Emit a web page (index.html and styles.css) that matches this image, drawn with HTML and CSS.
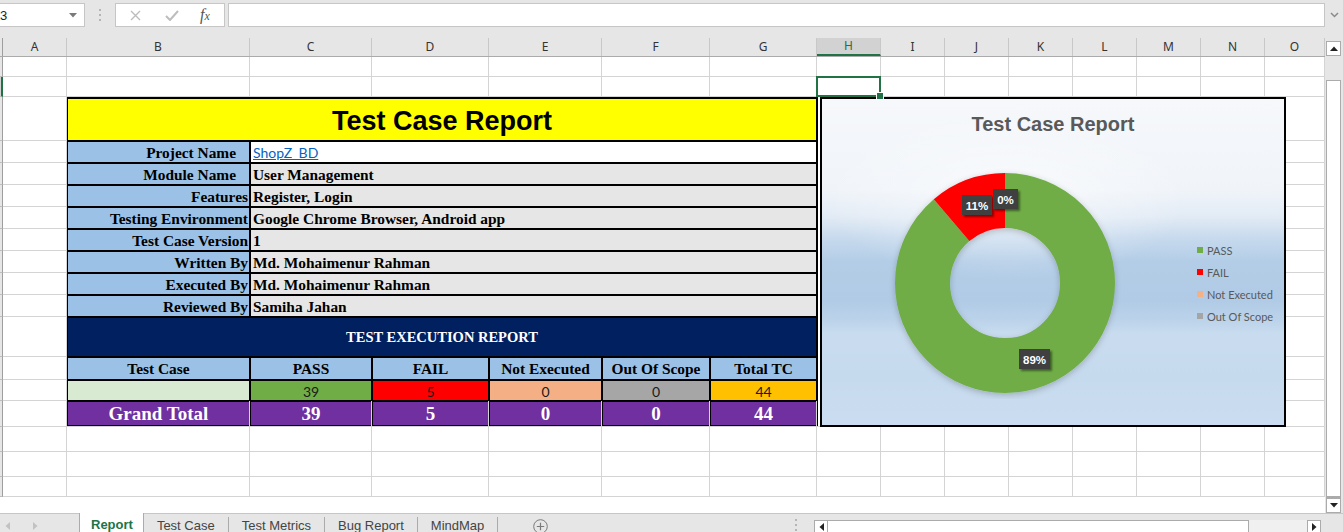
FILE: index.html
```html
<!DOCTYPE html>
<html>
<head>
<meta charset="utf-8">
<title>Test Case Report</title>
<link rel="stylesheet" href="styles.css">
</head>
<body>
<div class="app">
  <div class="fbar">
    <div class="namebox">
      <span class="nm">3</span>
      <svg class="dd" width="8" height="5" viewBox="0 0 8 5"><path d="M0 0H8L4 4.5Z" fill="#7a7a7a"/></svg>
    </div>
    <div class="grip"><svg width="3" height="12" viewBox="0 0 3 12"><rect x="0" y="0" width="2" height="2" fill="#b5b5b5"/><rect x="0" y="5" width="2" height="2" fill="#b5b5b5"/><rect x="0" y="10" width="2" height="2" fill="#b5b5b5"/></svg></div>
    <div class="tools">
      <svg width="11" height="11" viewBox="0 0 11 11"><path d="M1 1L10 10M10 1L1 10" stroke="#bdbdbd" stroke-width="1.4" fill="none"/></svg>
      <svg width="14" height="11" viewBox="0 0 14 11"><path d="M1 6L5 10L13 1" stroke="#bdbdbd" stroke-width="2" fill="none"/></svg>
      <span class="fx"><i>f</i><small>x</small></span>
    </div>
    <div class="finput"></div>
    <div class="chev"><svg width="9" height="6" viewBox="0 0 9 6"><path d="M1 1L4.5 4.5L8 1" stroke="#8a8a8a" stroke-width="1.5" fill="none"/></svg></div>
  </div>

  <div class="main">
    <div class="workspace">
      <div class="colheads">
        <div class="corner"></div>
        <div>A</div><div>B</div><div>C</div><div>D</div><div>E</div><div>F</div><div>G</div>
        <div class="on">H</div><div>I</div><div>J</div><div>K</div><div>L</div><div>M</div><div>N</div><div>O</div>
      </div>

      <div class="sheet">
        <div class="rep">
          <div class="title">Test Case Report</div>

          <div class="lbl pad">Project Name</div><div class="val link">ShopZ_BD</div>
          <div class="lbl pad">Module Name</div><div class="val">User Management</div>
          <div class="lbl">Features</div><div class="val">Register, Login</div>
          <div class="lbl">Testing Environment</div><div class="val">Google Chrome Browser, Android app</div>
          <div class="lbl">Test Case Version</div><div class="val">1</div>
          <div class="lbl">Written By</div><div class="val">Md. Mohaimenur Rahman</div>
          <div class="lbl">Executed By</div><div class="val">Md. Mohaimenur Rahman</div>
          <div class="lbl">Reviewed By</div><div class="val">Samiha Jahan</div>

          <div class="navy">TEST EXECUTION REPORT</div>

          <div class="hd">Test Case</div><div class="hd">PASS</div><div class="hd">FAIL</div><div class="hd">Not Executed</div><div class="hd">Out Of Scope</div><div class="hd">Total TC</div>

          <div class="num tc"></div><div class="num pass">39</div><div class="num fail">5</div><div class="num notex">0</div><div class="num oos">0</div><div class="num total">44</div>

          <div class="gt">Grand Total</div><div class="gt">39</div><div class="gt">5</div><div class="gt">0</div><div class="gt">0</div><div class="gt">44</div>
        </div>

        <div class="chart">
          <h2 class="ctitle">Test Case Report</h2>
          <div class="plot">
            <svg class="donut" width="240" height="240" viewBox="0 0 240 240">
              <defs>
                <filter id="ringshadow" x="-20%" y="-20%" width="140%" height="140%">
                  <feDropShadow dx="0" dy="2" stdDeviation="3" flood-color="#000" flood-opacity="0.22"/>
                </filter>
                <filter id="lblshadow" x="-30%" y="-30%" width="160%" height="160%">
                  <feDropShadow dx="2" dy="2" stdDeviation="1.2" flood-color="#000" flood-opacity="0.45"/>
                </filter>
              </defs>
              <g filter="url(#ringshadow)">
                <g transform="rotate(-90 120 120)">
                  <circle cx="120" cy="120" r="82.5" fill="none" stroke="#70ad47" stroke-width="55" stroke-dasharray="459.5 600"/>
                  <circle cx="120" cy="120" r="82.5" fill="none" stroke="#ff0000" stroke-width="55" stroke-dasharray="58.9 600" stroke-dashoffset="-459.5"/>
                </g>
              </g>
              <g filter="url(#lblshadow)">
                <rect x="77" y="32" width="30" height="20" fill="#404040"/>
                <rect x="108" y="26" width="25" height="20" fill="#404040"/>
                <rect x="134" y="186" width="31" height="20" fill="#404040"/>
              </g>
              <g class="dl">
                <text x="92" y="46.5">11%</text>
                <text x="120.5" y="40.5">0%</text>
                <text x="149.5" y="200.5">89%</text>
              </g>
            </svg>
            <ul class="legend">
              <li><span class="sw" style="background:#70ad47"></span>PASS</li>
              <li><span class="sw" style="background:#ff0000"></span>FAIL</li>
              <li><span class="sw" style="background:#f4b183"></span>Not Executed</li>
              <li><span class="sw" style="background:#a5a5a5"></span>Out Of Scope</li>
            </ul>
          </div>
        </div>

        <!-- row 1 -->
        <i class="rh"></i><i></i><i></i><i></i><i></i><i></i><i></i><i></i><i></i><i></i><i></i><i></i><i></i><i></i><i></i><i></i>
        <!-- row 2 (selected row) -->
        <i class="rh on"></i><i></i><i></i><i></i><i></i><i></i><i></i><i></i><i class="sel"></i><i></i><i></i><i></i><i></i><i></i><i></i><i></i>
        <!-- rows beside the report and the chart -->
        <i class="rh"></i><i></i><i></i>
        <i class="rh"></i><i></i><i></i>
        <i class="rh"></i><i></i><i></i>
        <i class="rh"></i><i></i><i></i>
        <i class="rh"></i><i></i><i></i>
        <i class="rh"></i><i></i><i></i>
        <i class="rh"></i><i></i><i></i>
        <i class="rh"></i><i></i><i></i>
        <i class="rh"></i><i></i><i></i>
        <i class="rh"></i><i></i><i></i>
        <i class="rh"></i><i></i><i></i>
        <i class="rh"></i><i></i><i></i>
        <!-- rows below -->
        <i class="rh"></i><i></i><i></i><i></i><i></i><i></i><i></i><i></i><i></i><i></i><i></i><i></i><i></i><i></i><i></i><i></i>
        <i class="rh"></i><i></i><i></i><i></i><i></i><i></i><i></i><i></i><i></i><i></i><i></i><i></i><i></i><i></i><i></i><i></i>
        <i class="rh"></i><i></i><i></i><i></i><i></i><i></i><i></i><i></i><i></i><i></i><i></i><i></i><i></i><i></i><i></i><i></i>
        <i class="rh"></i><i></i><i></i><i></i><i></i><i></i><i></i><i></i><i></i><i></i><i></i><i></i><i></i><i></i><i></i><i></i>
      </div>
    </div>

    <div class="vscroll">
      <div class="sbtn"><svg width="8" height="5" viewBox="0 0 8 5"><path d="M0 5H8L4 0.5Z" fill="#222"/></svg></div>
      <div class="strack"></div>
      <div class="sthumb"></div>
      <div class="sbtn"><svg width="8" height="5" viewBox="0 0 8 5"><path d="M0 0H8L4 4.5Z" fill="#222"/></svg></div>
    </div>
  </div>

  <div class="tabbar">
    <div class="nav">
      <svg width="5" height="8" viewBox="0 0 5 8"><path d="M5 0V8L0.5 4Z" fill="#c2c2c2"/></svg>
      <svg width="5" height="8" viewBox="0 0 5 8"><path d="M0 0V8L4.5 4Z" fill="#c2c2c2"/></svg>
    </div>
    <div class="tab on">Report</div>
    <div class="tab">Test Case</div>
    <div class="tab">Test Metrics</div>
    <div class="tab">Bug Report</div>
    <div class="tab">MindMap</div>
    <div class="add"><svg width="15" height="15" viewBox="0 0 15 15"><circle cx="7.5" cy="7.5" r="6.8" fill="none" stroke="#7a7a7a" stroke-width="1"/><path d="M7.5 3.8V11.2M3.8 7.5H11.2" stroke="#7a7a7a" stroke-width="1.2"/></svg></div>
    <div class="hgrip"><svg width="3" height="12" viewBox="0 0 3 12"><rect x="0" y="0" width="2" height="2" fill="#b5b5b5"/><rect x="0" y="5" width="2" height="2" fill="#b5b5b5"/><rect x="0" y="10" width="2" height="2" fill="#b5b5b5"/></svg></div>
    <div class="hscroll">
      <div class="hbtn"><svg width="5" height="8" viewBox="0 0 5 8"><path d="M5 0V8L0.5 4Z" fill="#222"/></svg></div>
      <div class="hthumb"></div>
      <div class="htrack"></div>
      <div class="hbtn"><svg width="5" height="8" viewBox="0 0 5 8"><path d="M0 0V8L4.5 4Z" fill="#222"/></svg></div>
    </div>
  </div>
</div>
</body>
</html>
```

FILE: styles.css
```css
* { box-sizing: border-box; margin: 0; padding: 0; }
html, body { width: 1343px; height: 532px; overflow: hidden; background: #e6e6e6; }
body { font-family: "Liberation Sans", Arial, sans-serif; color: #222; }

.app { display: flex; flex-direction: column; width: 1343px; height: 532px; }

/* ---------- formula bar ---------- */
.fbar { height: 38px; flex: none; display: flex; align-items: flex-start; padding-top: 3px; background: #e6e6e6; }
.namebox { width: 85px; height: 24px; background: #fff; border: 1px solid #c6c6c6; border-left: none;
  display: flex; align-items: center; justify-content: space-between; padding-right: 7px; font-size: 13px; color: #222; overflow: hidden; }
.namebox .nm { margin-left: 0; }
.grip { width: 30px; height: 24px; display: flex; align-items: center; justify-content: center; }
.tools { width: 110px; height: 24px; background: #fff; border: 1px solid #c6c6c6;
  display: flex; align-items: center; padding-left: 14px; }
.tools svg:first-child { margin-right: 24px; }
.tools svg:nth-child(2) { margin-right: 21px; }
.fx { font-family: "Liberation Serif", serif; color: #555; font-size: 16px; line-height: 1; }
.fx i { font-style: italic; }
.fx small { font-size: 12px; font-style: italic; }
.finput { width: 1097px; height: 24px; margin-left: 3px; background: #fff; border: 1px solid #c6c6c6; }
.chev { flex: 1; height: 24px; display: flex; align-items: center; justify-content: center; }

/* ---------- main area ---------- */
.main { display: flex; height: 475px; flex: none; }
.workspace { width: 1325px; display: flex; flex-direction: column; }

.colheads, .sheet {
  display: grid;
  grid-template-columns: 3px 64px 183px 122px 117px 113px 108px 107px repeat(7, 64px) 60px;
}
.colheads { height: 19px; background: #e6e6e6; border-bottom: 1px solid #ababab; }
.colheads div { border-right: 1px solid #c8c8c8; font-family: "Noto Sans", sans-serif; font-size: 12px; color: #333;
  display: flex; align-items: center; justify-content: center; line-height: 1; }
.colheads .corner { border-right: 1px solid #9e9e9e; }
.colheads .on { background: #d2d2d2; color: #217346; border-bottom: 2px solid #217346; }

.sheet { height: 456px; overflow: hidden; background: #fff;
  grid-template-rows: 20px 20px 44px repeat(8, 22px) 40px 23px 21px 26px 25px 25px 20px 20px; }
.sheet i { border-right: 1px solid #d4d4d4; border-bottom: 1px solid #d4d4d4; }
.sheet i.rh { background: #e6e6e6; border-right-color: #9e9e9e; border-bottom-color: #bdbdbd; }
.sheet i.rh.on { background: #d2d2d2; border-right: 2px solid #217346; }
.sheet i.sel { position: relative; z-index: 3; }
.sheet i.sel::before { content: ""; position: absolute; left: -1px; top: -1px; right: -1px; bottom: -1px; border: 2px solid #217346; }
.sheet i.sel::after { content: ""; position: absolute; right: -4px; bottom: -4px; width: 6px; height: 6px; background: #217346; border: 1px solid #fff; }

/* ---------- report table ---------- */
.rep { grid-column: 3 / 9; grid-row: 3 / 15; margin-left: -1px; width: 752px; align-self: start;
  display: grid; grid-template-columns: 181px 120px 115px 111px 106px 105px;
  grid-template-rows: 41px repeat(8, 20px) 38px 21px 19px 23px;
  gap: 2px; padding: 2px; background: #000;
  font-family: "Liberation Serif", "Times New Roman", serif; font-weight: bold; font-size: 15.4px; color: #000; }
.rep > div { display: flex; align-items: center; white-space: nowrap; overflow: hidden; padding-top: 1px; }
.rep .title { grid-column: span 6; background: #ffff00; justify-content: center;
  font-family: "Liberation Sans", Arial, sans-serif; font-size: 27px; padding-top: 3px; }
.rep .lbl { background: #9bc2e6; justify-content: flex-end; padding-right: 1px; }
.rep .lbl.pad { padding-right: 13px; }
.rep .val { grid-column: span 5; background: #e7e6e6; padding-left: 2px; }
.rep .val.link { background: #fff; font-family: Lato, "Liberation Sans", sans-serif; font-weight: normal; font-size: 14px;
  color: #0563c1; text-decoration: underline; }
.rep .navy { grid-column: span 6; background: #002060; color: #fff; justify-content: center; font-size: 14.5px; }
.rep .hd { background: #9bc2e6; justify-content: center; }
.rep .num { justify-content: center; font-family: Lato, "Liberation Sans", sans-serif; font-weight: normal; font-size: 14px; color: #1a1a1a; }
.rep .tc { background: #d9ead3; }
.rep .pass { background: #70ad47; }
.rep .fail { background: #ff0000; }
.rep .notex { background: #f4b084; }
.rep .oos { background: #a6a6a6; }
.rep .total { background: #ffc000; }
.rep .gt { background: #7030a0; color: #fff; justify-content: center; font-size: 19px; }

/* ---------- chart ---------- */
.chart { grid-column: 9 / 16; grid-row: 3 / 15; margin-left: 3px; width: 466px; height: 330px; align-self: start;
  position: relative; z-index: 2; border: 2px solid #000;
  display: flex; flex-direction: column;
  background:
    radial-gradient(ellipse 260px 120px at 40% 30%, rgba(255,255,255,0.55), rgba(255,255,255,0) 70%),
    linear-gradient(to bottom, #f6f8fb 0%, #f0f4f9 28%, #e2ebf5 36%, #c6d9ed 43%, #b3cde7 50%, #b1cbe6 62%, #bcd3ea 68%, #c9dcef 72%, #c6daee 85%, #cbddf0 100%); }
.ctitle { margin-top: 12px; height: 26px; line-height: 26px; text-align: center; font-family: "Liberation Sans", Arial, sans-serif;
  font-weight: bold; font-size: 20px; color: #595959; }
.plot { display: flex; align-items: center; margin-top: 26px; }
.donut { margin-left: 63px; flex: none; }
.dl text { font-family: "Liberation Sans", Arial, sans-serif; font-weight: bold; font-size: 11.5px; fill: #fff; text-anchor: middle; }
.legend { list-style: none; margin-left: 72px; font-family: Lato, "Liberation Sans", sans-serif; font-size: 11px; color: #595959; }
.legend li { height: 22px; display: flex; align-items: center; }
.legend .sw { width: 6px; height: 6px; margin-right: 4px; flex: none; }

/* ---------- vertical scrollbar ---------- */
.vscroll { width: 18px; display: flex; flex-direction: column; padding: 3px 2px 0 1px; background: #e6e6e6; }
.sbtn { height: 15px; flex: none; background: #fff; border: 1px solid #ababab; display: flex; align-items: center; justify-content: center; }
.strack { height: 24px; flex: none; }
.sthumb { flex: 1; background: #fff; border: 1px solid #ababab; border-bottom-width: 2px; }

/* ---------- sheet tabs ---------- */
.tabbar { height: 19px; flex: none; display: flex; background: #e6e6e6; border-top: 1px solid #c6c6c6; }
.nav { width: 79px; display: flex; align-items: center; gap: 23px; padding-left: 5px; padding-top: 5px; }
.tab { font-size: 13px; color: #444; padding: 1px 13px 0 13px; line-height: 16px; white-space: nowrap;
  border-right: 1px solid #ababab; margin-top: 3px; }
.tab.on { background: #fff; color: #217346; font-weight: bold; border-left: 1px solid #ababab; padding: 4px 10px 0 11px;
  margin-top: -1px; }
.add { width: 84px; display: flex; justify-content: center; align-items: flex-start; padding-top: 5px; }
.hgrip { width: 232px; display: flex; justify-content: flex-end; padding-right: 16px; padding-top: 5px; }
.hscroll { width: 507px; height: 17px; margin-top: 6px; display: flex; }
.hbtn { width: 14px; flex: none; background: #fff; border: 1px solid #ababab; display: flex; justify-content: center; padding-top: 2px; }
.hthumb { width: 421px; background: #fff; border: 1px solid #ababab; border-left: none; }
.htrack { flex: 1; background: #f0f0f0; }
```
